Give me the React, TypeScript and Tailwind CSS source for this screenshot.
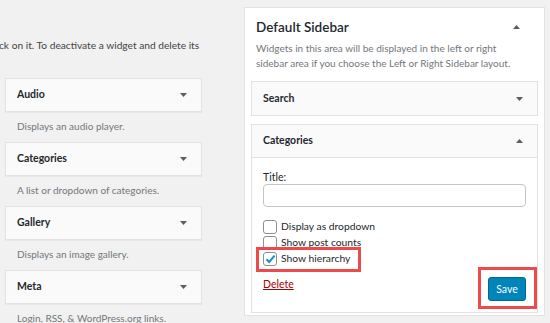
import React from "react"

const font = { fontFamily: 'Lato, "Noto Sans", sans-serif' }

function Arrow({ up = false }: { up?: boolean }) {
  return (
    <svg width="7" height="4" viewBox="0 0 7 4" className="shrink-0">
      {up ? (
        <path d="M0 4 L3.5 0 L7 4 Z" fill="#555d66" />
      ) : (
        <path d="M0 0 L7 0 L3.5 4 Z" fill="#555d66" />
      )}
    </svg>
  )
}

const widgets = [
  { name: "Audio", desc: "Displays an audio player." },
  { name: "Categories", desc: "A list or dropdown of categories." },
  { name: "Gallery", desc: "Displays an image gallery." },
  { name: "Meta", desc: "Login, RSS, & WordPress.org links." },
]

function Checkbox({ checked = false }: { checked?: boolean }) {
  return (
    <div className="w-[14px] h-[14px] rounded-[3px] border border-[#8c8f94] bg-white flex items-center justify-center shrink-0">
      {checked && (
        <svg width="11" height="10" viewBox="0 0 11 10">
          <path d="M1.5 5.2 L4.2 8 L9.6 1.6" fill="none" stroke="#1e8cbe" strokeWidth="2" />
        </svg>
      )}
    </div>
  )
}

export default function App() {
  return (
    <div className="w-[550px] h-[323px] bg-[#f1f1f1] flex overflow-hidden text-[#23282d]" style={font}>
      {/* available widgets */}
      <div className="w-[244px] shrink-0 overflow-hidden">
        <p className="mt-[37px] ml-[-1px] whitespace-nowrap text-[10.2px] leading-[16px] text-[#444]">
          ck on it. To deactivate a widget and delete its
        </p>
        <div className="mt-[25px] ml-[5px] w-[197px]">
          {widgets.map((w) => (
            <div key={w.name} className="h-[64px]">
              <div className="h-[34px] bg-[#fafafa] border border-[#e2e2e2] shadow-[0_1px_1px_rgba(0,0,0,0.04)] flex items-center justify-between pl-[11px] pr-[14px]">
                <span className="text-[10.5px] font-bold">{w.name}</span>
                <Arrow />
              </div>
              <p className="pl-[12px] pt-[7px] text-[10px] leading-[15px] text-[#72777c]">{w.desc}</p>
            </div>
          ))}
        </div>
      </div>

      {/* sidebar */}
      <div className="mt-[7px] w-[301px] h-[309px] bg-white border border-[#e2e2e2] px-[6px] shrink-0">
        <div className="px-[5px] pt-[9px] flex items-center justify-between">
          <h2 className="text-[13.5px] leading-[20px] font-semibold">Default Sidebar</h2>
          <span className="mr-[13px]"><Arrow up /></span>
        </div>
        <p className="px-[5px] mt-[4px] text-[10px] leading-[15px] text-[#72777c]">
          Widgets in this area will be displayed in the left or right<br />
          sidebar area if you choose the Left or Right Sidebar layout.
        </p>

        <div className="mt-[10px] h-[35px] bg-[#fafafa] border border-[#e2e2e2] flex items-center justify-between pl-[11px] pr-[14px]">
          <span className="text-[10.5px] font-bold">Search</span>
          <Arrow />
        </div>

        <div className="mt-[8px] border border-[#e2e2e2]">
          <div className="h-[33px] bg-[#fafafa] border-b border-[#e2e2e2] flex items-center justify-between pl-[11px] pr-[14px]">
            <span className="text-[10.5px] font-bold">Categories</span>
            <Arrow up />
          </div>
          <div className="px-[11px] pt-[12px] pb-[11px]">
            <label className="block text-[10.5px] leading-[14px]">Title:</label>
            <div className="h-[23px] rounded-[4px] border border-[#c4c4c4] bg-white" />
            <div className="mt-[12px] flex flex-col text-[10.3px] text-[#23282d]">
              <div className="h-[16px] flex items-center gap-[4px]">
                <Checkbox />
                <span>Display as dropdown</span>
              </div>
              <div className="h-[16px] flex items-center gap-[4px]">
                <Checkbox />
                <span>Show post counts</span>
              </div>
              <div className="relative h-[16px] flex items-center gap-[4px]">
                <Checkbox checked />
                <span>Show hierarchy</span>
                <div className="absolute left-[-7px] top-[-4px] w-[105px] h-[25px] border-[3px] border-[#ef4a4a]" />
              </div>
            </div>
            <div className="mt-[8px] flex items-start justify-between">
              <a className="pt-[1px] text-[10.5px] leading-[16px] text-[#a00] underline">Delete</a>
              <div className="relative">
                <button className="h-[24px] w-[38px] rounded-[3px] bg-[#0085ba] border border-[#006799] text-white text-[10.5px] leading-[20px]">
                  Save
                </button>
                <div className="absolute left-[-10px] top-[-8px] w-[59px] h-[42px] border-[3px] border-[#ef4a4a]" />
              </div>
            </div>
          </div>
        </div>
      </div>
    </div>
  )
}
